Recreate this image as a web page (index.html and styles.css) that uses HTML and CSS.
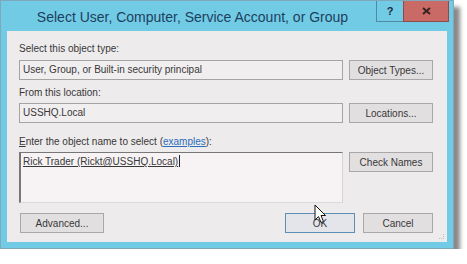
FILE: index.html
```html
<!DOCTYPE html>
<html lang="en">
<head>
    <meta charset="UTF-8">
    <title>Select User, Computer, Service Account, or Group</title>
    <link rel="stylesheet" href="styles.css">
</head>
<body>

    <div class="window">
        <div class="titlebar">
            <div class="title">Select User, Computer, Service Account, or Group</div>
            <div class="caption-btn help">?</div>
            <div class="caption-btn close">
                <svg width="9" height="8" viewBox="0 0 9 8"><path d="M1 1 L8 7 M8 1 L1 7" stroke="#3a2222" stroke-width="2"/></svg>
            </div>
        </div>

        <div class="dialog">
            <div class="label first">Select this object type:</div>
            <div class="row">
                <div class="field">User, Group, or Built-in security principal</div>
                <button class="btn">Object Types...</button>
            </div>

            <div class="label second">From this location:</div>
            <div class="row">
                <div class="field">USSHQ.Local</div>
                <button class="btn">Locations...</button>
            </div>

            <div class="label third"><u>E</u>nter the object name to select (<a href="#">examples</a>):</div>
            <div class="row top">
                <div class="names"><span class="resolved">Rick Trader (Rickt@USSHQ.Local)</span><span class="caret"></span></div>
                <button class="btn">Check Names</button>
            </div>

            <div class="footer">
                <button class="btn wide">Advanced...</button>
                <div class="spacer"></div>
                <button class="btn small default">OK</button>
                <button class="btn small">Cancel</button>
            </div>
            <div class="grip"></div>
        </div>
    </div>

    <!-- mouse pointer over the OK button -->
    <svg class="pointer" width="13" height="21" viewBox="0 0 13 21">
        <path d="M1 1 L1 16 L4.5 12.5 L7 18.5 L9.5 17.5 L7 11.5 L11.5 11.5 Z" fill="#fff" stroke="#111" stroke-width="1" stroke-linejoin="round"/>
    </svg>

</body>
</html>
```

FILE: styles.css
```css
body {
    margin: 0;
    background-color: #fff;
    font-family: "Liberation Sans", Arial, sans-serif;
}
.window {
    width: 452px;
    border: 1px solid #7fa9bb;
    background-color: #72cbe5;
    box-shadow: 6px 7px 4px rgba(40, 40, 40, 0.55);
}
.titlebar {
    display: flex;
    height: 30px;
}
.title {
    flex: 1;
    padding-left: 8px;
    text-align: center;
    font-size: 14px;
    line-height: 32px;
    color: #1d3f5e;
}
.caption-btn {
    height: 21px;
    display: flex;
    align-items: center;
    justify-content: center;
    box-sizing: border-box;
    border: 1px solid #4f8aa2;
    border-top: none;
}
.help {
    width: 27px;
    font-weight: bold;
    font-size: 11px;
    color: #1b2b3a;
    border-right: none;
}
.close {
    width: 46px;
    margin-right: 4px;
    background-color: #c96a66;
    border-color: #8c4a48;
}
.dialog {
    position: relative;
    margin: 0 6px 6px 6px;
    padding: 12px 14px 9px 12px;
    background-color: #eeebec;
    font-size: 10px;
    color: #383838;
}
.label {
    line-height: 12px;
    margin-bottom: 5px;
}
.label.second {
    margin-top: 7px;
    margin-bottom: 4px;
}
.label.third {
    margin-top: 13px;
    margin-bottom: 4px;
}
.label a {
    color: #2a6db8;
}
.row {
    display: flex;
    gap: 6px;
    align-items: center;
}
.row.top {
    align-items: flex-start;
}
.field {
    flex: 1;
    height: 20px;
    box-sizing: border-box;
    border: 1px solid #a5a3a4;
    background-color: #f1eeef;
    padding-left: 3px;
    line-height: 18px;
}
.names {
    flex: 1;
    height: 51px;
    box-sizing: border-box;
    border-style: solid;
    border-width: 1px 1px 1px 2px;
    border-color: #777 #d6d3d4 #dcd9da #777;
    background-color: #f7f3f4;
    padding: 2px 0 0 2px;
    line-height: 14px;
}
.resolved {
    text-decoration: underline;
}
.caret {
    display: inline-block;
    width: 1px;
    height: 12px;
    margin-left: 1px;
    vertical-align: -2px;
    background-color: #222;
}
.btn {
    width: 84px;
    height: 20px;
    box-sizing: border-box;
    border: 1px solid #a9a7a8;
    background-color: #e2dfe0;
    font-family: "Liberation Sans", Arial, sans-serif;
    font-size: 10px;
    color: #383838;
    padding: 0;
}
.footer {
    display: flex;
    gap: 8px;
    margin-top: 10px;
    padding-left: 1px;
}
.spacer {
    flex: 1;
}
.btn.small {
    width: 70px;
}
.btn.default {
    border-color: #5d8fb4;
    background-color: #e3e5ea;
}
.grip {
    position: absolute;
    right: 3px;
    bottom: 3px;
    width: 4px;
    height: 4px;
    border-right: 1px dotted #c4c1c2;
    border-bottom: 1px dotted #c4c1c2;
}
.pointer {
    position: absolute;
    left: 314px;
    top: 204px;
}
```
